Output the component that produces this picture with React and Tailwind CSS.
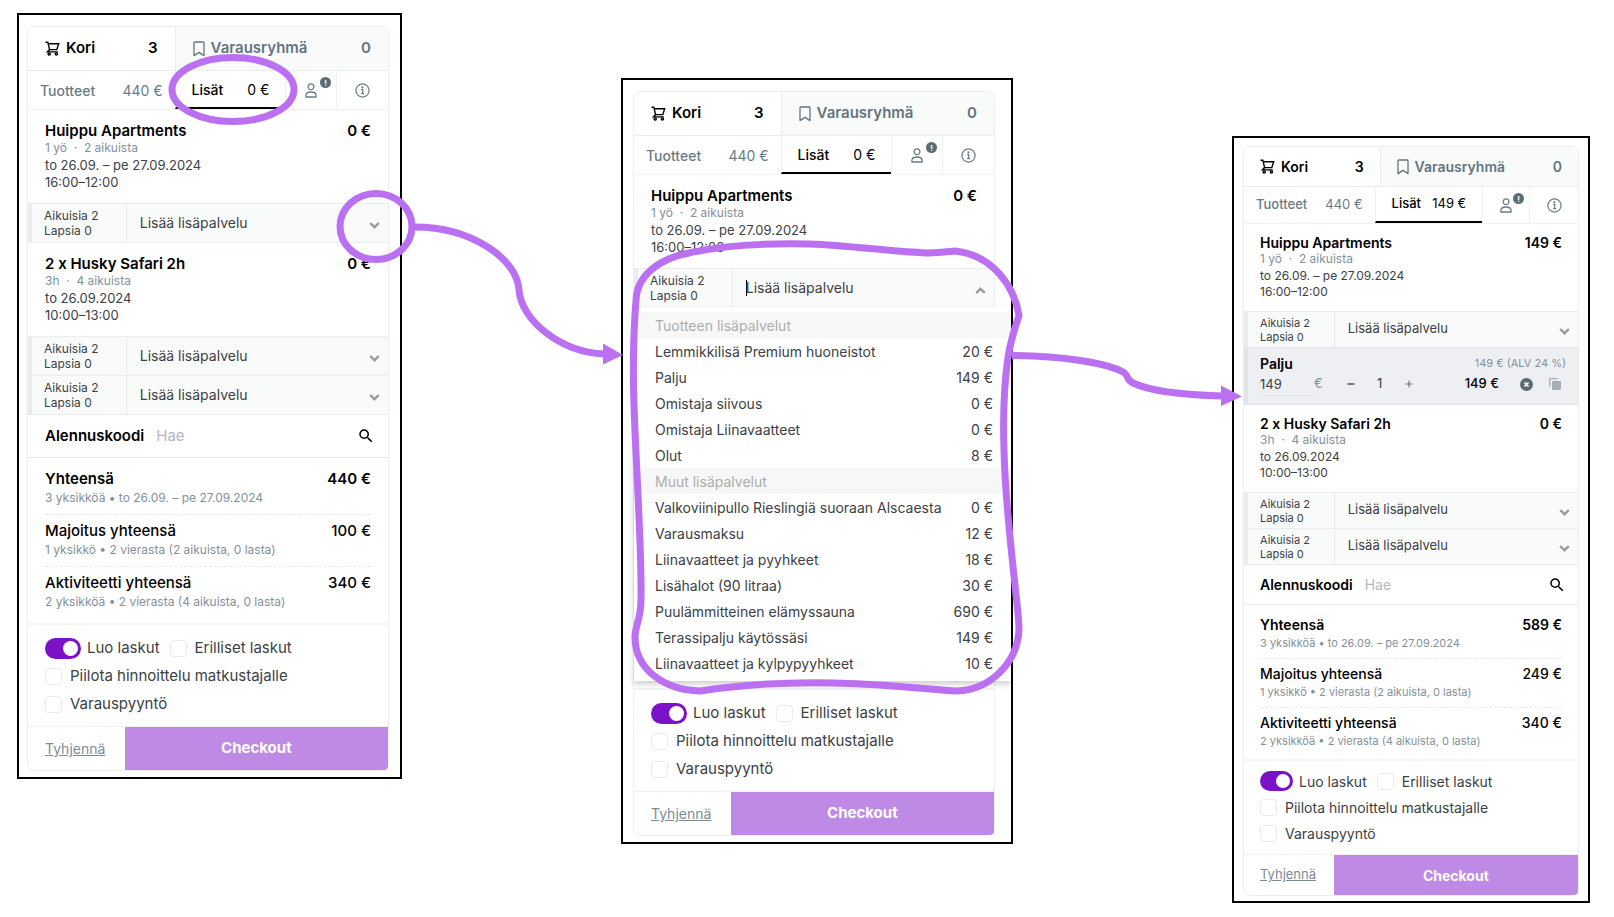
import clsx from "clsx";
import { MdSearch, MdRemove, MdAdd } from "react-icons/md";

const priceGroups = [
  {
    label: "Tuotteen lisäpalvelut",
    options: [
      ["Lemmikkilisä Premium huoneistot", "20 €"],
      ["Palju", "149 €"],
      ["Omistaja siivous", "0 €"],
      ["Omistaja Liinavaatteet", "0 €"],
      ["Olut", "8 €"],
    ],
  },
  {
    label: "Muut lisäpalvelut",
    options: [
      ["Valkoviinipullo Rieslingiä suoraan Alscaesta", "0 €"],
      ["Varausmaksu", "12 €"],
      ["Liinavaatteet ja pyyhkeet", "18 €"],
      ["Lisähalot (90 litraa)", "30 €"],
      ["Puulämmitteinen elämyssauna", "690 €"],
      ["Terassipalju käytössäsi", "149 €"],
      ["Liinavaatteet ja kylpypyyhkeet", "10 €"],
    ],
  },
];

// class names for the two widths the basket is shown in
const regular = {
  title: "text-[15px]",
  text: "text-[14px]",
  sub: "text-[12px]",
  small: "text-[12px] leading-[15px]",
  padX: "px-[17px]",
  tabs: "h-[44px] grid-cols-[minmax(0,147fr)_minmax(0,214fr)]",
  subTabs: "h-[39px] grid-cols-[minmax(0,147fr)_minmax(0,111fr)_minmax(0,52fr)_minmax(0,51fr)]",
  item: "pt-[11px] pb-[12px]",
  itemTitle: "leading-[20px]",
  date: "text-[13px] leading-[17px]",
  extra: "h-[39px] grid-cols-[minmax(0,99fr)_minmax(0,262fr)]",
  code: "h-[44px]",
  totals: "pt-[5px] pb-[5px]",
  total: "pt-[7px] pb-[6px]",
  totalSub: "text-[12px] leading-[20px]",
  settings: "h-[103px] pt-[9px]",
  settingRow: "h-[28px]",
  switch: "h-[21px] w-9 after:h-[15px] after:w-[15px]",
  footer: "h-[44px] grid-cols-[minmax(0,97fr)_minmax(0,264fr)]",
};

const compact = {
  title: "text-[14px]",
  text: "text-[13px]",
  sub: "text-[12px]",
  small: "text-[11px] leading-[14px]",
  padX: "px-[16px]",
  tabs: "h-[40px] grid-cols-[minmax(0,136fr)_minmax(0,199fr)]",
  subTabs: "h-[37px] grid-cols-[minmax(0,131fr)_minmax(0,108fr)_minmax(0,48fr)_minmax(0,48fr)]",
  item: "pt-[10px] pb-[11px]",
  itemTitle: "leading-[18px]",
  date: "text-[12px] leading-[16px]",
  extra: "h-[36px] grid-cols-[minmax(0,91fr)_minmax(0,244fr)]",
  code: "h-[41px]",
  totals: "pt-[5px] pb-[3px]",
  total: "pt-[6px] pb-[6px]",
  totalSub: "text-[11px] leading-[18px]",
  settings: "h-[95px] pt-[7px]",
  settingRow: "h-[26px]",
  switch: "h-[20px] w-[33px] after:h-[14px] after:w-[14px]",
  footer: "h-[41px] grid-cols-[minmax(0,90fr)_minmax(0,245fr)]",
};

const CartIcon = () => (
  <svg className="h-[15px] w-[15px] shrink-0" viewBox="0 0 15 15" fill="none" stroke="currentColor" strokeWidth="1.4">
    <path d="M.5 1.2h2.3L4.6 8.6h7.2l1.9-5.9H3.2" />
    <path d="M4.6 8.6 2.4 10.9h10.4" />
    <circle cx="4.2" cy="13" r="1.1" />
    <circle cx="11.4" cy="13" r="1.1" />
  </svg>
);

const BookmarkIcon = () => (
  <svg className="h-4 w-3 shrink-0" viewBox="0 0 12 16" fill="none" stroke="currentColor" strokeWidth="1.3">
    <path d="M1 1.7Q1 1 1.7 1h8.6q.7 0 .7.7V14.6L6 11.4l-5 3.2z" strokeLinejoin="round" />
  </svg>
);

const PersonIcon = () => (
  <svg className="h-[15px] w-3" viewBox="0 0 12 15" fill="none" stroke="currentColor" strokeWidth="1.3">
    <circle cx="6" cy="3.8" r="2.9" />
    <path d="M.9 14V12.6C.9 10.2 3 9 6 9s5.1 1.2 5.1 3.6V14z" strokeLinejoin="round" />
  </svg>
);

const InfoIcon = () => (
  <svg className="h-[15px] w-[15px]" viewBox="0 0 15 15" fill="none" stroke="currentColor" strokeWidth="1.2">
    <circle cx="7.5" cy="7.5" r="6.6" />
    <path d="M6.2 6.7h1.5v4M6.2 10.7h3" />
    <circle cx="7.4" cy="4.4" r=".5" fill="currentColor" />
  </svg>
);

const Chevron = ({ up }) => (
  <svg
    className={clsx("pointer-events-none mt-1 h-[7px] w-[11px] shrink-0 text-[#9a9a9a]", up && "rotate-180")}
    viewBox="0 0 11 7"
    fill="none"
    stroke="currentColor"
    strokeWidth="2.4"
  >
    <path d="M1.2 1 5.5 5.2 9.8 1" />
  </svg>
);

const RemoveIcon = () => (
  <svg className="h-[13px] w-[13px]" viewBox="0 0 13 13">
    <circle cx="6.5" cy="6.5" r="6.5" fill="#5b6c75" />
    <path d="m4.5 4.5 4 4m0-4-4 4" stroke="#fff" strokeWidth="1.7" />
  </svg>
);

const CopyIcon = () => (
  <svg className="h-3 w-3" viewBox="0 0 12 12" fill="currentColor">
    <path d="M0 1Q0 0 1 0h7.5v1.3H1.3V8.5H0z" />
    <rect x="3" y="3" width="9" height="9" rx="1" />
  </svg>
);

const Tabs = ({ s, extrasTotal }) => (
  <div>
    <div className={clsx("grid border-b border-[#e9edef]", s.tabs, s.title)}>
      <button className={clsx("flex items-center gap-[6px] font-semibold text-black", s.padX)}>
        <CartIcon />
        Kori
        <span className="ml-auto">3</span>
      </button>
      <button
        className={clsx(
          "flex items-center gap-[6px] rounded-tr-lg border-l border-[#e9edef] bg-[#f9fbfb] font-semibold text-[#64757e]",
          s.padX
        )}
      >
        <BookmarkIcon />
        Varausryhmä
        <span className="ml-auto">0</span>
      </button>
    </div>
    <div className={clsx("grid border-b border-[#f0f1f2] text-[#6b7b83]", s.subTabs, s.text)}>
      <button className="flex items-center justify-between px-3">
        <span className="font-medium">Tuotteet</span>
        440 €
      </button>
      <button className="flex items-center justify-between border-b-2 border-l border-b-black border-l-[#f0f1f2] px-4 text-black">
        <span className="font-medium">Lisät</span>
        {extrasTotal}
      </button>
      <button aria-label="Asiakas" className="relative flex items-center justify-center border-x border-[#f0f1f2]">
        <PersonIcon />
        <span className="absolute top-[6px] right-[5px] flex h-[11px] w-[11px] items-center justify-center rounded-full bg-[#5b6c75] text-[8px] font-bold text-white">
          !
        </span>
      </button>
      <button aria-label="Tiedot" className="flex items-center justify-center">
        <InfoIcon />
      </button>
    </div>
  </div>
);

const CartItem = ({ s, title, price, info, dates, times }) => (
  <div className={clsx(s.item, s.padX)}>
    <div className={clsx("flex justify-between font-semibold text-black", s.title, s.itemTitle)}>
      <span>{title}</span>
      <span>{price}</span>
    </div>
    <p className={clsx("leading-[14px] text-[#84919a]", s.sub)}>{info}</p>
    <p className={clsx("mt-[2px]", s.date)}>{dates}</p>
    <p className={s.date}>{times}</p>
  </div>
);

const ExtraRow = ({ s, id, open }) => (
  <div className={clsx("relative grid border-t border-[#e9edef] bg-[#f9fbfb]", s.extra)}>
    <div
      className={clsx(
        "flex flex-col justify-center border-r border-l-4 border-[#e9edef] pl-3",
        s.small
      )}
    >
      <span>Aikuisia 2</span>
      <span>Lapsia 0</span>
    </div>
    <div className={clsx("flex items-center pr-2 pl-[13px]", s.text)}>
      {open ? (
        <>
          <span className="-mr-px h-4 w-px bg-black" />
          <input
            id={id}
            role="combobox"
            aria-label="Lisäpalvelu"
            aria-expanded="true"
            aria-controls={id + "-list"}
            placeholder="Lisää lisäpalvelu"
            className="h-full w-0 grow bg-transparent pb-[2px] outline-none placeholder:text-[#3c4144]"
          />
        </>
      ) : (
        <select id={id} aria-label="Lisäpalvelu" className="h-full w-0 grow appearance-none bg-transparent pb-[2px] outline-none">
          <option>Lisää lisäpalvelu</option>
        </select>
      )}
      <Chevron up={open} />
    </div>
    {open && <ExtraMenu id={id + "-list"} />}
  </div>
);

const ExtraMenu = ({ id }) => (
  <div
    id={id}
    role="listbox"
    className="absolute top-full -right-[17px] left-0 z-10 bg-white pt-[5px] pb-[5px] text-[14px] shadow-[0_3px_6px_rgba(0,0,0,0.2)]"
  >
    {priceGroups.map((group) => (
      <div key={group.label} role="group" aria-label={group.label}>
        <div className="flex h-[26px] items-center bg-[#f7f7f7] pl-[21px] text-[#adadad]">{group.label}</div>
        {group.options.map(([name, price]) => (
          <div key={name} role="option" aria-selected="false" className="flex h-[26px] items-center justify-between pr-[18px] pl-[21px]">
            <span>{name}</span>
            <span>{price}</span>
          </div>
        ))}
      </div>
    ))}
  </div>
);

const SelectedExtra = () => (
  <div className="border-y border-l-4 border-[#e2e5e8] bg-[#edeff2] pt-[6px] pr-3 pb-[8px] pl-3 text-[13px]">
    <div className="flex h-[18px] items-center justify-between">
      <span className="text-[14px] font-semibold text-black">Palju</span>
      <span className="text-[11px] text-[#84919a]">149 € (ALV 24 %)</span>
    </div>
    <div className="flex h-6 items-center">
      <input
        aria-label="Hinta"
        defaultValue="149"
        className="h-6 w-[54px] border-b border-[#e2e5e8] bg-transparent outline-none"
      />
      <span className="text-[#84919a]">€</span>
      <button aria-label="Vähennä" className="ml-[22px] text-black">
        <MdRemove className="h-3 w-3" />
      </button>
      <span className="w-[46px] text-center">1</span>
      <button aria-label="Lisää" className="text-[#5b6c75]">
        <MdAdd className="h-3 w-3" />
      </button>
      <span className="ml-auto font-medium text-black">149 €</span>
      <button aria-label="Poista" className="ml-[21px]">
        <RemoveIcon />
      </button>
      <button aria-label="Kopioi" className="mr-[5px] ml-4 text-[#a4afb5]">
        <CopyIcon />
      </button>
    </div>
  </div>
);

const Total = ({ s, title, info, price, bold, last }) => (
  <div className={clsx(s.total, !last && "border-b border-dashed border-[#e6e8ea]")}>
    <div className={clsx("flex justify-between leading-[18px] text-black", s.title, bold ? "font-semibold" : "font-medium")}>
      <span>{title}</span>
      <span>{price}</span>
    </div>
    <p className={clsx("text-[#84919a]", s.totalSub)}>{info}</p>
  </div>
);

const CheckOption = ({ label }) => (
  <label className="flex items-center gap-2">
    <input type="checkbox" className="h-[17px] w-[17px] appearance-none rounded border border-[#ebebeb] bg-white" />
    {label}
  </label>
);

const Settings = ({ s }) => (
  <div className={clsx("border-t-2 border-[#f2f3f4]", s.settings, s.padX, s.title)}>
    <div className={clsx("flex items-center gap-[10px]", s.settingRow)}>
      <label className="flex items-center gap-[6px]">
        <input
          type="checkbox"
          role="switch"
          defaultChecked
          className={clsx(
            "relative appearance-none rounded-full bg-[#7b12c8] after:absolute after:top-[3px] after:right-[3px] after:rounded-full after:bg-white",
            s.switch
          )}
        />
        Luo laskut
      </label>
      <CheckOption label="Erilliset laskut" />
    </div>
    <div className={clsx("flex items-center", s.settingRow)}>
      <CheckOption label="Piilota hinnoittelu matkustajalle" />
    </div>
    <div className={clsx("flex items-center", s.settingRow)}>
      <CheckOption label="Varauspyyntö" />
    </div>
  </div>
);

const Cart = ({ s, name, extrasTotal, total, lodging, open, selected }) => (
  <div className="rounded-lg border border-[#eceeef] bg-white">
    <Tabs s={s} extrasTotal={extrasTotal} />
    <CartItem
      s={s}
      title="Huippu Apartments"
      price={extrasTotal}
      info="1 yö  ·  2 aikuista"
      dates="to 26.09. – pe 27.09.2024"
      times="16:00–12:00"
    />
    <ExtraRow s={s} id={name + "-extra-1"} open={open} />
    {selected ? <SelectedExtra /> : <div className="border-t border-[#e9edef]" />}
    <CartItem s={s} title="2 x Husky Safari 2h" price="0 €" info="3h  ·  4 aikuista" dates="to 26.09.2024" times="10:00–13:00" />
    <ExtraRow s={s} id={name + "-extra-2"} />
    <ExtraRow s={s} id={name + "-extra-3"} />
    <div className={clsx("flex items-center border-y border-[#e9edef]", s.code, s.padX)}>
      <label htmlFor={name + "-code"} className={clsx("mr-3 font-semibold text-black", s.title)}>
        Alennuskoodi
      </label>
      <input
        id={name + "-code"}
        placeholder="Hae"
        className={clsx("w-0 grow bg-transparent outline-none placeholder:text-[#b3b8c2]", s.title)}
      />
      <button aria-label="Hae" className="-mr-1 text-black">
        <MdSearch className="h-[18px] w-[18px]" />
      </button>
    </div>
    <div className={clsx(s.totals, s.padX)}>
      <Total s={s} title="Yhteensä" price={total} info="3 yksikköä • to 26.09. – pe 27.09.2024" bold />
      <Total s={s} title="Majoitus yhteensä" price={lodging} info="1 yksikkö • 2 vierasta (2 aikuista, 0 lasta)" />
      <Total s={s} title="Aktiviteetti yhteensä" price="340 €" info="2 yksikköä • 2 vierasta (4 aikuista, 0 lasta)" last />
    </div>
    <Settings s={s} />
    <div className={clsx("grid border-t border-[#f0f1f2]", s.footer)}>
      <a href="#" className={clsx("flex items-center text-[#7d8c94] underline", s.padX, s.text)}>
        Tyhjennä
      </a>
      <button className={clsx("rounded-br-sm bg-[#be8ae6] font-bold text-white", s.title)}>Checkout</button>
    </div>
  </div>
);

const Annotations = () => (
  <svg
    className="pointer-events-none absolute inset-0 z-20 h-full w-full"
    viewBox="0 0 1614 917"
    preserveAspectRatio="none"
    fill="none"
    stroke="#ba70f0"
    strokeWidth="7"
    strokeLinejoin="round"
  >
    <ellipse cx="233" cy="89.5" rx="61" ry="32" />
    <ellipse cx="376" cy="226.5" rx="36" ry="33" />
    <path d="M415 227C470 227 517 258 519 290C521 320 560 352 604 354" />
    <path d="M603 343.5 623 355 603 364.5z" fill="#ba70f0" stroke="none" />
    <path d="M636 300C637 275 660 258 690 252.7C730 244 770 243 810 244C850 245.5 885 251 922 252.7C935 253.5 945 252 955 251C992 255 1014 285 1019 315.5C1014 330 1010 345 1008 357C1004 385 1003 420 1004 450C1005 500 1012 555 1016 595C1018 612 1019 622 1019 630C1017 665 988 690 957 691C925 689 900 685 833 683C785 682 745 684 700 691C665 690 635 670 635 637C635 627 641 618 641 600C642 540 634 440 633.5 383C633 345 634 325 636 300z" />
    <path d="M1012 355.5C1060 356 1105 362 1124 372.5C1129 376 1126 380 1133 383C1152 392 1185 395 1222 396" />
    <path d="M1221 385.5 1242 396.5 1221 406z" fill="#ba70f0" stroke="none" />
  </svg>
);

const App = () => {
  return (
    <main className="relative bg-white pt-[13px] pr-6 pb-[14px] pl-[17px] font-[Inter,'Open_Sans',sans-serif] whitespace-pre text-[#3c4144]">
      <div className="grid grid-cols-[minmax(0,385fr)_minmax(0,219fr)_minmax(0,392fr)_minmax(0,219fr)_minmax(0,358fr)] items-start">
        <section className="border-2 border-black pt-[11px] pr-[11px] pb-[6px] pl-2">
          <Cart s={regular} name="first" extrasTotal="0 €" total="440 €" lodging="100 €" />
        </section>
        <section className="col-start-3 mt-[65px] overflow-hidden border-2 border-black pt-[11px] pr-4 pb-[6px] pl-[10px]">
          <Cart s={regular} name="second" extrasTotal="0 €" total="440 €" lodging="100 €" open />
        </section>
        <section className="col-start-5 mt-[123px] border-2 border-black pt-[8px] pr-[9px] pb-[5px] pl-[9px]">
          <Cart s={compact} name="third" extrasTotal="149 €" total="589 €" lodging="249 €" selected />
        </section>
      </div>
      <Annotations />
    </main>
  );
};

export default App;
